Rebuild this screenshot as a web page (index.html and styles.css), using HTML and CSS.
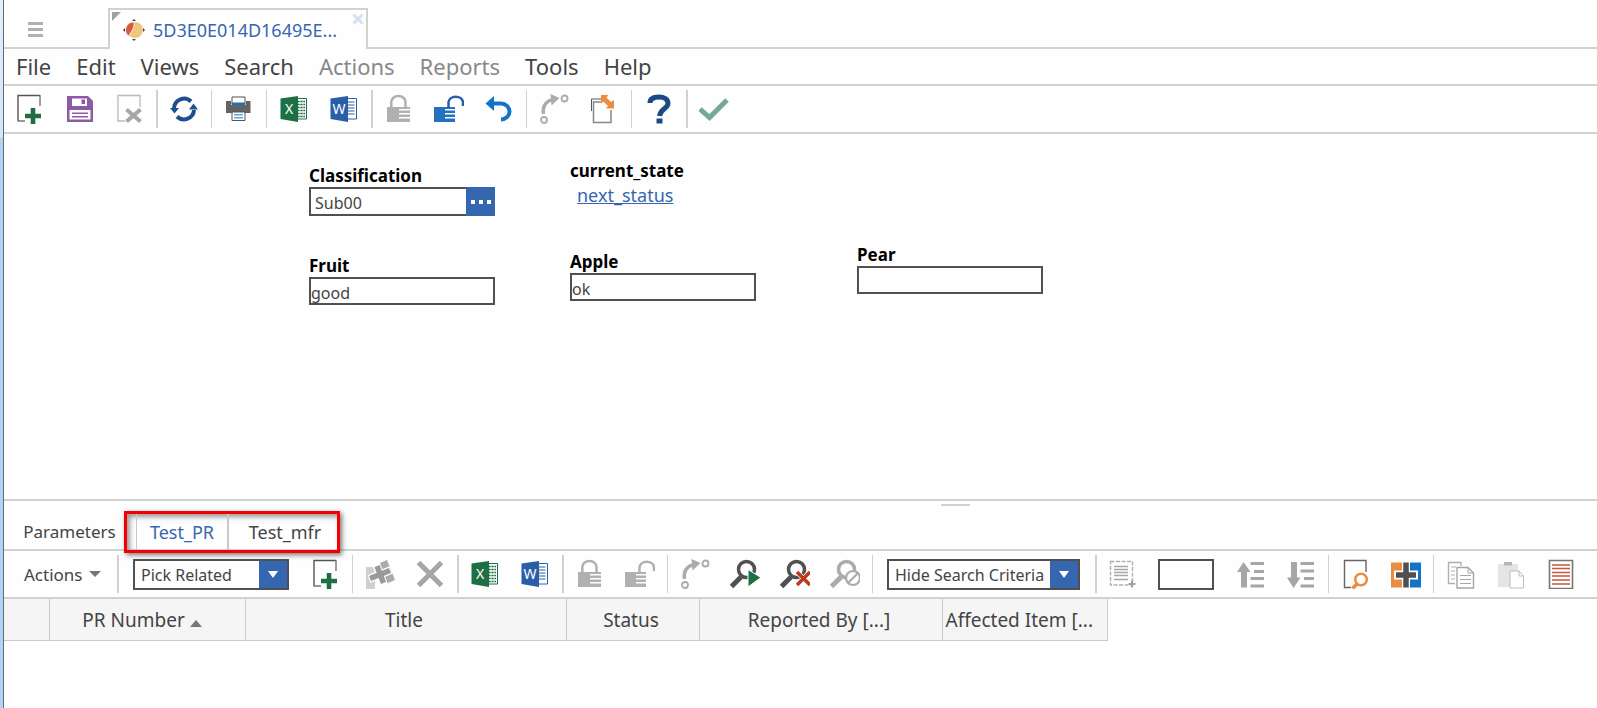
FILE: index.html
```html
<!DOCTYPE html>
<html lang="en">
<head>
<meta charset="utf-8">
<title>5D3E0E014D16495E</title>
<link rel="stylesheet" href="styles.css">
</head>
<body>
<svg class="sprite" aria-hidden="true">
  <symbol id="i-add" viewBox="0 0 30 30"><path d="M4 27V1.5H26" fill="none" stroke="#555" stroke-width="1.4"/><path d="M26 1V12M3.500 27H11" fill="none" stroke="#777" stroke-width="1.4"/><path d="M11 22H27M19 14V30" stroke="#1e7044" stroke-width="4.600"/></symbol>
  <symbol id="i-save" viewBox="0 0 30 30"><path d="M3 2H24L29 7V28H3Z" fill="#8e5aa8"/><path d="M8 4.500H23V12H8ZM5.500 16H26.500V25.500H5.500Z" fill="#fff"/><path d="M17.500 5.500H21V10H17.500ZM8 18.500H24V20H8ZM8 22H24V23.500H8Z" fill="#8e5aa8"/></symbol>
  <symbol id="i-del" viewBox="0 0 30 30"><path d="M11 27H4V1.500H26V13" fill="none" stroke="#b9b9b9" stroke-width="1.300"/><path d="M12.500 15.500L26.500 27.500M26.500 15.500L12.500 27.500" stroke="#a6a6a6" stroke-width="4"/></symbol>
  <symbol id="i-refresh" viewBox="0 0 30 30"><path d="M5 14A10 10 0 0 1 22 7.500M25 16A10 10 0 0 1 8 22.500" fill="none" stroke="#1f4e8c" stroke-width="4"/><path d="M1 14H10L5.500 19.500ZM20 15.500H29L24.500 9.500Z" fill="#1f4e8c"/></symbol>
  <symbol id="i-print" viewBox="0 0 30 30"><path d="M2 7H7V11H22V7H26.500V19H2Z" fill="#636363"/><path d="M8 10.500V3H21V10.500ZM8 18V26.500H21V18Z" fill="#fff" stroke="#555"/><path d="M8 8.500H21V11H8Z" fill="#1a73b8"/><path d="M10 20H19V21.500H10ZM10 23H19V24.500H10Z" fill="#58a6dd"/></symbol>
  <symbol id="i-excel" viewBox="0 0 30 30"><path d="M16 4.500H27.500V25H16Z" fill="#fff" stroke="#1e7044"/><path d="M18 7.500H26M18 10.500H26M18 13.500H26M18 16.500H26M18 19.500H26M18 22.500H26" stroke="#1e7044" stroke-width="1.300"/><path d="M21 6V24M24 6V24" stroke="#fff" stroke-width=".7"/><path d="M1.500 4.500L19 2V28L1.500 25Z" fill="#1e7044"/><text x="10" y="20" text-anchor="middle" class="glyph">X</text></symbol>
  <symbol id="i-word" viewBox="0 0 30 30"><path d="M16 4.500H27.500V25H16Z" fill="#fff" stroke="#2b5ea8"/><path d="M18 8H25.500M18 11H25.500M18 14H25.500M18 17H25.500M18 20H25.500" stroke="#2b5ea8"/><path d="M1.500 4.500L19 2V28L1.500 25Z" fill="#2b5ea8"/><text x="10" y="20" text-anchor="middle" class="glyph">W</text></symbol>
  <symbol id="i-lock" viewBox="0 0 30 30"><path d="M7.300 14V8A7 6 0 0 1 21.500 8V14" fill="none" stroke="#b0b0b0" stroke-width="2.500"/><path d="M3 13H26V15H15V16.500H26V19H15V20.500H26V23H15V24.500H26V28H3Z" fill="#b0b0b0"/></symbol>
  <symbol id="i-unlock" viewBox="0 0 30 30"><path d="M-1 13H21V15H11V16.500H21V19H11V20.500H21V23H11V24.500H21V28H-1Z" fill="var(--lock, #b0b0b0)"/><path d="M14.500 14V8A7.300 6 0 0 1 29 8V12" fill="none" stroke="var(--shackle, #b0b0b0)" stroke-width="2.500"/></symbol>
  <symbol id="i-undo" viewBox="0 0 30 30"><path d="M8 9.500H17A8.500 8 0 0 1 17 25.500" fill="none" stroke="#1174c8" stroke-width="4"/><path d="M1.500 9.500L10 2V17Z" fill="#1174c8"/></symbol>
  <symbol id="i-route" viewBox="0 0 30 30"><path d="M4.500 20C3 12 8 6 14 6" fill="none" stroke="#ababab" stroke-width="3.500"/><path d="M11.500 0L20.500 4L12.500 11.500Z" fill="#ababab"/><circle cx="25.500" cy="4.500" r="3" fill="none" stroke="#ababab" stroke-width="1.800"/><circle cx="5" cy="26" r="3" fill="none" stroke="#ababab" stroke-width="1.800"/></symbol>
  <symbol id="i-revise" viewBox="0 0 30 30"><path d="M2.500 17V5H12" fill="none" stroke="#555"/><path d="M12 8H4.500V28.500H22V16" fill="none" stroke="#888" stroke-width="1.500"/><path d="M12 1H19.500L17.500 3.500L22 8L25 6V14.500H17L19 12L14.500 7.500L12 9.500Z" fill="#e88d42"/></symbol>
  <symbol id="i-help" viewBox="0 0 30 30"><path d="M6 9C6 4.500 10 3 15 3C20 3 24 5 24 9.500C24 14.500 16.500 14.500 15.500 22" fill="none" stroke="#1c4a87" stroke-width="5"/><path d="M12.500 24.500H18.500V29.500H12.500Z" fill="#1c4a87"/></symbol>
  <symbol id="i-done" viewBox="0 0 30 30"><path d="M1 15L10.500 23.500L28 6" fill="none" stroke="#76a896" stroke-width="5"/></symbol>
  <symbol id="i-puzzle" viewBox="0 0 30 30"><path d="M1 8H10V30H1Z" fill="#cfcfcf"/><path d="M10 6L22 1L30 21L16 27Z" fill="#ababab"/><path d="M4 20L26 11M11 5L19 26" stroke="#fff" stroke-width="8"/><path d="M5 19.500L25 11.500M12 7L18.500 24" stroke="#999" stroke-width="5.500"/></symbol>
  <symbol id="i-x" viewBox="0 0 30 30"><path d="M3.500 3.500L26.500 26.500M26.500 3.500L3.500 26.500" stroke="#a6a6a6" stroke-width="5"/></symbol>
  <symbol id="i-glass" viewBox="0 0 30 30"><circle cx="16.500" cy="10.500" r="8" fill="none" stroke="currentColor" stroke-width="3.500"/><path d="M1.500 27.500L11 18" stroke="currentColor" stroke-width="5"/></symbol>
  <symbol id="i-find" viewBox="0 0 30 30"><use href="#i-glass"/><path d="M18 10.500L31 18.500L18 28Z" fill="#1e7044" stroke="#fff"/></symbol>
  <symbol id="i-unfind" viewBox="0 0 30 30"><use href="#i-glass"/><path d="M17 13L30 26M30 13L17 26" stroke="#fff" stroke-width="5"/><path d="M17 13L30 26M30 13L17 26" stroke="#bf3a1a" stroke-width="3.500"/></symbol>
  <symbol id="i-nofind" viewBox="0 0 30 30"><use href="#i-glass"/><circle cx="23" cy="19" r="7" fill="#fff" stroke="currentColor" stroke-width="2.200"/><path d="M18.500 23.500L27.500 14.500" stroke="currentColor" stroke-width="2.200"/></symbol>
  <symbol id="i-select" viewBox="0 0 30 30"><path d="M2.500 2.500H24.500V26H2.500Z" fill="none" stroke="#b0b0b0" stroke-width="1.400" stroke-dasharray="4 1.500"/><path d="M6 7.500H20M6 10.500H20M6 13.500H20M6 16.500H20M6 20.500H20" stroke="#a6a6a6" stroke-width="1.300"/><path d="M20.500 25H27.500M24 21.500V28.500" stroke="#a0a0a0" stroke-width="2"/></symbol>
  <symbol id="i-up" viewBox="0 0 30 30"><path d="M1 13L7.500 3L14.500 13H11V28.500H5V13Z" fill="#a6a6a6"/><path d="M14.500 4.500H28M18 12.500H28M14.500 19.500H28M14.500 27H28" stroke="#a6a6a6" stroke-width="3"/></symbol>
  <symbol id="i-down" viewBox="0 0 30 30"><path d="M1 18.500L7.500 29L14.500 18.500H11V3H5V18.500Z" fill="#a6a6a6"/><path d="M14.500 4.500H28M14.500 12H28M18 19.500H28M14.500 27H28" stroke="#a6a6a6" stroke-width="3"/></symbol>
  <symbol id="i-preview" viewBox="0 0 30 30"><path d="M10 28.500H3.500V1.500H25V13" fill="none" stroke="#666" stroke-width="1.400"/><circle cx="20" cy="20.500" r="5.800" fill="#fff" stroke="#e88d42" stroke-width="2.500"/><path d="M11.500 29.500L16 25" stroke="#e88d42" stroke-width="3.500"/></symbol>
  <symbol id="i-compare" viewBox="0 0 30 30"><path d="M0 3.500H11V28.500H0Z" fill="#e88d42"/><path d="M19 3.500H30V28.500H19Z" fill="#1174c8"/><path d="M3 16H27" stroke="#fff" stroke-width="9"/><path d="M15 2V30" stroke="#fff" stroke-width="8"/><path d="M5 16H25M15 3.500V28.500" stroke="#4f4f4f" stroke-width="5.500"/></symbol>
  <symbol id="i-copy" viewBox="0 0 30 30"><path d="M9 24.500H2.500V3.500H15V7" fill="none" stroke="#b0b0b0" stroke-width="1.400"/><path d="M5 8H10M5 12H9M5 16H9M5 20H9" stroke="#b0b0b0"/><path d="M11 8.500H22L27.500 14V29H11Z" fill="#fff" stroke="#a6a6a6" stroke-width="1.400"/><path d="M22 8.500V14H27.500M14 16.500H25M14 20.500H25M14 24.500H25" fill="none" stroke="#a6a6a6"/></symbol>
  <symbol id="i-paste" viewBox="0 0 30 30"><path d="M2 5H22V28H2Z" fill="#e4e4e4"/><path d="M8 3H16V6.500H8Z" fill="#b5b5b5"/><path d="M14 12H23L27.500 17V29H14Z" fill="#fff" stroke="#bdbdbd"/><path d="M23 12V17H27.500" fill="none" stroke="#bdbdbd"/></symbol>
  <symbol id="i-list" viewBox="0 0 30 30"><path d="M3.500 1.500H26.500V29.500H3.500Z" fill="#fff" stroke="#777" stroke-width="1.600"/><path d="M6 6H24M6 9.500H24M6 13.500H24M6 17H24M6 21H24M6 25H24" stroke="#c9543d" stroke-width="1.500"/></symbol>
</svg>

<div class="window">
  <header class="tabbar">
    <button class="burger" aria-label="Menu"><span></span><span></span><span></span></button>
    <div class="doc-tab">
      <svg class="doc-icon" viewBox="0 0 22 22" aria-hidden="true"><circle cx="12" cy="11" r="8" fill="#efc67f"/><path d="M10 3A8 8 0 0 0 6 17.500C6 14 12 11 11 3Z" fill="#d65b3d" stroke="#fff" stroke-width=".8"/><path d="M11 0L13 2H9ZM11 22L13 20H9ZM0 11L2 9V13ZM22 11L20 9V13Z" fill="#444"/></svg>
      <span class="doc-title">5D3E0E014D16495E...</span>
      <button class="doc-close" aria-label="Close tab"><svg viewBox="0 0 12 12"><path d="M1.500 1.500L10.500 10.500M10.500 1.500L1.500 10.500" stroke="#d5e1f3" stroke-width="3"/></svg></button>
    </div>
  </header>

  <nav class="menubar">
    <button>File</button><button>Edit</button><button>Views</button><button>Search</button><button disabled>Actions</button><button disabled>Reports</button><button>Tools</button><button>Help</button>
  </nav>

  <div class="toolbar" role="toolbar" aria-label="Item">
    <button class="tool" aria-label="New"><svg><use href="#i-add"/></svg></button>
    <button class="tool" aria-label="Save"><svg><use href="#i-save"/></svg></button>
    <button class="tool" aria-label="Delete"><svg><use href="#i-del"/></svg></button>
    <span class="sep"></span>
    <button class="tool" aria-label="Refresh"><svg><use href="#i-refresh"/></svg></button>
    <span class="sep thin"></span>
    <button class="tool" aria-label="Print"><svg><use href="#i-print"/></svg></button>
    <span class="sep thin"></span>
    <button class="tool" aria-label="Export to Excel"><svg><use href="#i-excel"/></svg></button>
    <button class="tool" aria-label="Export to Word"><svg><use href="#i-word"/></svg></button>
    <span class="sep"></span>
    <button class="tool" aria-label="Lock"><svg><use href="#i-lock"/></svg></button>
    <button class="tool active-lock" aria-label="Unlock"><svg><use href="#i-unlock"/></svg></button>
    <button class="tool" aria-label="Undo"><svg><use href="#i-undo"/></svg></button>
    <span class="sep thin"></span>
    <button class="tool" aria-label="Promote"><svg><use href="#i-route"/></svg></button>
    <button class="tool" aria-label="Revisions"><svg><use href="#i-revise"/></svg></button>
    <span class="sep thin"></span>
    <button class="tool" aria-label="Help"><svg><use href="#i-help"/></svg></button>
    <span class="sep"></span>
    <button class="tool" aria-label="Done"><svg><use href="#i-done"/></svg></button>
  </div>

  <main class="form">
    <div class="col col-first">
      <div class="field">
        <label for="classification">Classification</label>
        <div class="picker"><input id="classification" type="text" value="Sub00"><button aria-label="Choose classification"><i></i><i></i><i></i></button></div>
      </div>
      <div class="field">
        <label for="fruit">Fruit</label>
        <input id="fruit" type="text" value="good">
      </div>
    </div>
    <div class="col col-second">
      <div class="field state">
        <span class="caption">current_state</span>
        <a href="#">next_status</a>
      </div>
      <div class="field">
        <label for="apple">Apple</label>
        <input id="apple" type="text" value="ok">
      </div>
    </div>
    <div class="col col-third">
      <div class="field">
        <label for="pear">Pear</label>
        <input id="pear" type="text">
      </div>
    </div>
  </main>

  <div class="splitter"><span></span></div>

  <div class="tabs" role="tablist">
    <button role="tab">Parameters</button>
    <div class="marked">
      <button role="tab" aria-selected="true" class="current">Test_PR</button>
      <button role="tab">Test_mfr</button>
    </div>
  </div>

  <div class="toolbar grid-tools" role="toolbar" aria-label="Relationships">
    <button class="actions">Actions <svg viewBox="0 0 12 6"><path d="M0 0H12L6 6Z" fill="#777"/></svg></button>
    <span class="sep"></span>
    <div class="combo combo-pick"><select aria-label="Add mode"><option>Pick Related</option></select><span><svg viewBox="0 0 10 7"><path d="M0 0H10L5 7Z" fill="#fff"/></svg></span></div>
    <button class="tool" aria-label="Add"><svg><use href="#i-add"/></svg></button>
    <span class="sep thin"></span>
    <button class="tool" aria-label="Pick and replace"><svg><use href="#i-puzzle"/></svg></button>
    <button class="tool" aria-label="Remove"><svg><use href="#i-x"/></svg></button>
    <span class="sep"></span>
    <button class="tool" aria-label="Export to Excel"><svg><use href="#i-excel"/></svg></button>
    <button class="tool" aria-label="Export to Word"><svg><use href="#i-word"/></svg></button>
    <span class="sep"></span>
    <button class="tool" aria-label="Lock"><svg><use href="#i-lock"/></svg></button>
    <button class="tool" aria-label="Unlock"><svg><use href="#i-unlock"/></svg></button>
    <span class="sep thin"></span>
    <button class="tool" aria-label="Promote"><svg><use href="#i-route"/></svg></button>
    <button class="tool" aria-label="Run search"><svg><use href="#i-find"/></svg></button>
    <button class="tool" aria-label="Clear search"><svg><use href="#i-unfind"/></svg></button>
    <button class="tool muted" aria-label="Stop search"><svg><use href="#i-nofind"/></svg></button>
    <span class="sep thin"></span>
    <div class="combo combo-search"><select aria-label="Search mode"><option>Hide Search Criteria</option></select><span><svg viewBox="0 0 10 7"><path d="M0 0H10L5 7Z" fill="#fff"/></svg></span></div>
    <span class="sep"></span>
    <button class="tool" aria-label="Select all"><svg><use href="#i-select"/></svg></button>
    <input class="page-size" type="text" aria-label="Page size">
    <button class="tool" aria-label="Promote row"><svg><use href="#i-up"/></svg></button>
    <button class="tool" aria-label="Demote row"><svg><use href="#i-down"/></svg></button>
    <span class="sep thin"></span>
    <button class="tool" aria-label="Preview"><svg><use href="#i-preview"/></svg></button>
    <button class="tool" aria-label="Compare"><svg><use href="#i-compare"/></svg></button>
    <span class="sep thin"></span>
    <button class="tool" aria-label="Copy"><svg><use href="#i-copy"/></svg></button>
    <button class="tool" aria-label="Paste"><svg><use href="#i-paste"/></svg></button>
    <button class="tool" aria-label="Show list"><svg><use href="#i-list"/></svg></button>
  </div>

  <div class="grid">
    <table>
      <colgroup><col class="c-mark"><col class="c-number"><col class="c-title"><col class="c-status"><col class="c-reporter"><col class="c-item"></colgroup>
      <thead><tr><th></th><th class="sorted">PR Number <svg class="sort" viewBox="0 0 12 7"><path d="M0 7H12L6 0Z" fill="#777"/></svg></th><th>Title</th><th>Status</th><th>Reported By [...]</th><th class="left">Affected Item [...</th></tr></thead>
    </table>
  </div>
</div>
</body>
</html>
```

FILE: styles.css
```css
* { box-sizing: border-box; }

html {
  background:
    linear-gradient(#e3effa, #d3e5f7) 0 0 / 3px 138px no-repeat,
    linear-gradient(90deg, #b3d3f3 3px, #fefefe 3px);
}

body {
  margin: 0;
  color: #444;
  font-family: "Noto Sans", "DejaVu Sans", sans-serif;
}

button, input, select {
  font: inherit;
  color: inherit;
  margin: 0;
  padding: 0;
  border: 0;
  border-radius: 0;
  background: none;
}

svg { display: block; }
.sprite { display: none; }
.glyph { font: 14px "Noto Sans", sans-serif; fill: #fff; }

.window {
  min-height: 100vh;
  margin-left: 3px;
  border-left: 1px solid #5f6b78;
  display: flex;
  flex-direction: column;
}

.tabbar {
  height: 49px;
  display: flex;
  align-items: flex-end;
  border-bottom: 2px solid #d1d1d1;
}

.burger {
  width: 62px;
  height: 37px;
  margin-right: 42px;
  padding-top: 2px;
  display: flex;
  flex-direction: column;
  align-items: center;
  justify-content: center;
  gap: 3px;
}
.burger span { width: 15px; height: 3px; background: #b0b0b0; }

.doc-tab {
  position: relative;
  width: 260px;
  height: 41px;
  margin-bottom: -2px;
  padding: 0 0 0 13px;
  display: flex;
  align-items: center;
  gap: 8px;
  border: 2px solid #d1d1d1;
  border-bottom: 0;
  background: #fefefe;
}
.doc-tab::before {
  content: "";
  position: absolute;
  left: 2px;
  top: 2px;
  border-top: 9px solid #a0a0a0;
  border-right: 9px solid transparent;
}
.doc-icon { width: 22px; height: 22px; }
.doc-title { font-size: 18px; color: #3567b1; }
.doc-close { position: absolute; right: 2px; top: 3px; }
.doc-close svg { width: 12px; height: 12px; }

.menubar {
  height: 37px;
  padding: 0 0 2px 12px;
  display: flex;
  align-items: center;
  gap: 25px;
  border-bottom: 2px solid #d1d1d1;
  font-size: 22px;
  line-height: 30px;
}
.menubar button:disabled { color: #888; }

.toolbar {
  height: 48px;
  display: flex;
  align-items: center;
  border-bottom: 2px solid #d1d1d1;
}
.tool {
  width: 50px;
  height: 38px;
  flex: none;
  display: flex;
  align-items: center;
  justify-content: center;
  color: #505050;
}
.tool svg { width: 30px; height: 30px; overflow: visible; }
.muted { color: #ababab; }
.active-lock { --lock: #2472bd; --shackle: #2c5da6; }
.sep {
  width: 5px;
  height: 38px;
  flex: none;
  border: solid transparent;
  border-width: 0 1px 0 2px;
  background: #d1d1d1 content-box;
}
.thin { border-width: 0 2px; }

.form { flex: 0 0 365px; padding-left: 305px; display: flex; }
.col { display: flex; flex-direction: column; }
.col-first { width: 261px; padding-top: 32px; gap: 40px; }
.col-second { width: 287px; padding-top: 27px; gap: 44px; }
.col-third { padding-top: 111px; }
.field { width: 186px; }
.field label, .caption {
  display: block;
  padding-bottom: 1px;
  color: #000;
  font-size: 17px;
  font-weight: 700;
  line-height: 20px;
}
.field > input, .picker {
  width: 186px;
  height: 28px;
  border: 2px solid #505050;
  font-size: 16px;
}
.field > input { display: block; padding-top: 3px; }
.picker { display: flex; height: 29px; border-right: 0; }
.picker input { flex: 1; min-width: 0; padding: 3px 0 0 4px; }
.picker button {
  width: 29px;
  margin: -2px 0;
  display: flex;
  align-items: center;
  justify-content: center;
  gap: 4px;
  background: #3567b1;
}
.picker i { width: 4px; height: 4px; background: #fff; }
.state a {
  display: block;
  padding-left: 7px;
  color: #3567b1;
  font-size: 18px;
  line-height: 26px;
}

.splitter { border-top: 2px solid #d1d1d1; padding: 3px 0 0 937px; height: 9px; }
.splitter span { display: block; width: 29px; height: 2px; background: #d1d1d1; }

.tabs {
  height: 43px;
  padding-left: 18px;
  display: flex;
  align-items: flex-start;
  border-bottom: 2px solid #d1d1d1;
  font-size: 17px;
  line-height: 36px;
}
.tabs > button { width: 95px; padding-top: 6px; }
.marked {
  position: relative;
  width: 216px;
  height: 42px;
  margin: 3px 0 0 7px;
  padding-left: 9px;
  display: flex;
  border: 3px solid #f50000;
  box-shadow: 2px 2px 5px #777, inset 3px 3px 5px #999;
  font-size: 18px;
}
.marked button { flex: 1; padding-left: 4px; }
.marked .current {
  flex: 0 0 93px;
  padding: 0;
  border: solid #c9c9c9;
  border-width: 0 2px 0 1px;
  color: #3567b1;
}

.grid-tools { padding-left: 19px; }
.actions {
  width: 92px;
  padding-left: 1px;
  flex: none;
  display: flex;
  align-items: center;
  gap: 7px;
  font-size: 17px;
}
.actions svg { width: 12px; height: 6px; }
.combo { position: relative; flex: none; height: 31px; }
.combo-pick { width: 156px; margin: 0 11px 0 13px; }
.combo-search { width: 193px; margin: 0 13px 0 12px; }
.combo select {
  appearance: none;
  width: 100%;
  height: 31px;
  padding: 1px 0 0 6px;
  border: 2px solid #505050;
  font-size: 16px;
}
.combo span {
  position: absolute;
  right: 2px;
  top: 2px;
  bottom: 2px;
  width: 28px;
  display: flex;
  align-items: center;
  justify-content: center;
  background: #3567b1;
  pointer-events: none;
}
.combo span svg { width: 10px; height: 7px; }
.page-size { width: 56px; height: 31px; margin: 0 12px 0 10px; border: 2px solid #505050; flex: none; }

table { table-layout: fixed; width: 1103px; border-collapse: collapse; }
.c-mark { width: 45px; }
.c-number { width: 196px; }
.c-title { width: 321px; }
.c-status { width: 133px; }
.c-reporter { width: 243px; }
.c-item { width: 165px; }
th {
  height: 41px;
  padding: 2px 6px 0 3px;
  border: solid #cbcbcb;
  border-width: 0 1px 1px 0;
  background: #f5f5f5;
  font-size: 19px;
  font-weight: 400;
  line-height: 28px;
  white-space: nowrap;
}
.sorted { padding-right: 13px; }
.left { text-align: left; }
.sort { display: inline-block; width: 12px; height: 7px; }
```
